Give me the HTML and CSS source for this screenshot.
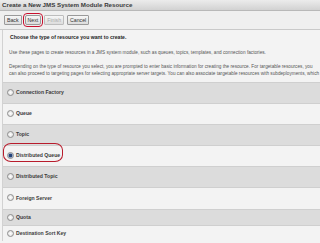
FILE: index.html
```html
<!DOCTYPE html>
<html lang="en">
<head>
    <meta charset="UTF-8">
    <title>Create a New JMS System Module Resource</title>
    <link rel="stylesheet" href="styles.css">
</head>
<body>
    <div class="title">Create a New JMS System Module Resource</div>

    <div class="toolbar">
        <button class="btn">Back</button>
        <button class="btn next">Next</button>
        <button class="btn" disabled>Finish</button>
        <button class="btn">Cancel</button>
    </div>

    <div class="content">
        <h2>Choose the type of resource you want to create.</h2>
        <p class="intro">Use these pages to create resources in a JMS system module, such as queues, topics, templates, and connection factories.</p>
        <p class="intro">Depending on the type of resource you select, you are prompted to enter basic information for creating the resource. For targetable resources, you<br>can also proceed to targeting pages for selecting appropriate server targets. You can also associate targetable resources with subdeployments, which</p>

        <ul class="types">
            <li class="row dark"><span class="radio"></span>Connection Factory</li>
            <li class="row"><span class="radio"></span>Queue</li>
            <li class="row dark"><span class="radio"></span>Topic</li>
            <li class="row marked"><span class="radio checked"></span>Distributed Queue</li>
            <li class="row dark"><span class="radio"></span>Distributed Topic</li>
            <li class="row tall"><span class="radio"></span>Foreign Server</li>
            <li class="row dark short"><span class="radio"></span>Quota</li>
            <li class="row short"><span class="radio"></span>Destination Sort Key</li>
        </ul>
    </div>
</body>
</html>
```

FILE: styles.css
```css
body {
    margin: 0;
    width: 320px;
    height: 243px;
    overflow: hidden;
    font-family: "Liberation Sans", Arial, sans-serif;
    background-color: #f3f3f3;
    color: #333;
}
.title {
    height: 10px;
    line-height: 10px;
    padding-left: 2px;
    font-size: 6.2px;
    font-weight: bold;
    color: #3a3a3a;
    white-space: nowrap;
    background: linear-gradient(#ececec, #d2d2d2);
    border-bottom: 1px solid #b8b8b8;
}
.toolbar {
    display: flex;
    gap: 3px;
    align-items: center;
    height: 18px;
    padding-left: 4px;
    background-color: #efefef;
    border-bottom: 1px solid #c9c9c9;
}
.btn {
    height: 10px;
    padding: 0 2px;
    font-family: "Liberation Sans", Arial, sans-serif;
    font-size: 5.2px;
    color: #333;
    background: linear-gradient(#f7f7f7, #dcdcdc);
    border: 1px solid #9a9a9a;
    border-radius: 1px;
}
.btn:disabled {
    color: #a8a8a8;
    border-color: #bdbdbd;
}
.next {
    outline: 1.5px solid #c8102e;
    outline-offset: 1px;
    border-radius: 2px;
}
.content {
    margin-left: 2px;
    border-left: 1px solid #d2d2d2;
    white-space: nowrap;
}
h2 {
    margin: 0;
    padding: 4px 0 0 7px;
    height: 8px;
    font-size: 5.1px;
    color: #222;
}
.intro {
    margin: 0;
    padding: 7px 0 0 6px;
    font-size: 4.7px;
    line-height: 7px;
    color: #555;
}
.types {
    list-style: none;
    margin: 5px 0 0;
    padding: 0;
}
.row {
    display: flex;
    align-items: center;
    height: 21px;
    padding-left: 4px;
    padding-bottom: 2px;
    box-sizing: border-box;
    font-size: 5.1px;
    font-weight: bold;
    color: #3a3a3a;
    border-top: 1px solid #cfcfcf;
}
.dark {
    background-color: #dcdcdc;
}
.tall {
    height: 22px;
}
.short {
    height: 16px;
    padding-bottom: 1px;
}
.radio {
    width: 5px;
    height: 5px;
    margin-right: 2px;
    border: 1px solid #8e8e8e;
    border-radius: 50%;
    background: radial-gradient(#ffffff, #d8d8d8);
}
.checked {
    background: radial-gradient(#26457a 40%, #9fb1cf 60%, #e8e8e8);
}
.marked {
    position: relative;
}
.marked::after {
    content: "";
    position: absolute;
    left: 0;
    top: -3px;
    width: 58px;
    height: 17px;
    border: 1px solid #b81c2c;
    border-radius: 8px / 7px;
}
```
